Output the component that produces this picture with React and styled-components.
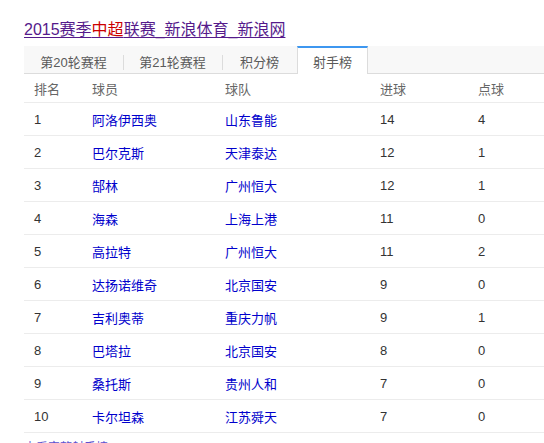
import React from "react";
import styled, { createGlobalStyle } from "styled-components";

const GlobalStyle = createGlobalStyle`
  html, body {
    margin: 0;
    padding: 0;
    background: #fff;
    overflow: hidden;
  }
  body {
    font-family: "Liberation Sans", "Noto Sans CJK SC", sans-serif;
    font-size: 13px;
    color: #333;
  }
`;

const tabs = [
  { label: "第20轮赛程", width: 99 },
  { label: "第21轮赛程", width: 99 },
  { label: "积分榜", width: 75 },
  { label: "射手榜", width: 71 },
];

const scorers = [
  { rank: 1, player: "阿洛伊西奥", team: "山东鲁能", goals: 14, penalties: 4 },
  { rank: 2, player: "巴尔克斯", team: "天津泰达", goals: 12, penalties: 1 },
  { rank: 3, player: "郜林", team: "广州恒大", goals: 12, penalties: 1 },
  { rank: 4, player: "海森", team: "上海上港", goals: 11, penalties: 0 },
  { rank: 5, player: "高拉特", team: "广州恒大", goals: 11, penalties: 2 },
  { rank: 6, player: "达扬诺维奇", team: "北京国安", goals: 9, penalties: 0 },
  { rank: 7, player: "吉利奥蒂", team: "重庆力帆", goals: 9, penalties: 1 },
  { rank: 8, player: "巴塔拉", team: "北京国安", goals: 8, penalties: 0 },
  { rank: 9, player: "桑托斯", team: "贵州人和", goals: 7, penalties: 0 },
  { rank: 10, player: "卡尔坦森", team: "江苏舜天", goals: 7, penalties: 0 },
];

export default function App() {
  const activeTab = 3;

  return (
    <Page>
      <GlobalStyle />
      <Title href="#">
        2015赛季<Hot>中超</Hot>联赛_新浪体育_新浪网
      </Title>
      <TabBar>
        {tabs.map((tab, index) => (
          <Tab key={tab.label} width={tab.width} isActive={index === activeTab}>
            {tab.label}
          </Tab>
        ))}
      </TabBar>
      <Table>
        <HeadRow>
          <Cell>排名</Cell>
          <Cell>球员</Cell>
          <Cell>球队</Cell>
          <Cell>进球</Cell>
          <Cell>点球</Cell>
        </HeadRow>
        {scorers.map((row) => (
          <Row key={row.rank}>
            <Cell>{row.rank}</Cell>
            <Cell>
              <CellLink href="#">{row.player}</CellLink>
            </Cell>
            <Cell>
              <CellLink href="#">{row.team}</CellLink>
            </Cell>
            <Cell>{row.goals}</Cell>
            <Cell>{row.penalties}</Cell>
          </Row>
        ))}
      </Table>
      <MoreLink href="#">查看完整射手榜</MoreLink>
    </Page>
  );
}

const Page = styled.div`
  padding: 19px 0 0 24px;
  height: 443px;
  box-sizing: border-box;
  overflow: hidden;
`;

const Title = styled.a`
  display: inline-block;
  font-size: 16px;
  line-height: 22px;
  color: #551a8b;
  text-decoration: underline;
  text-underline-offset: 2px;
  margin-bottom: 5px;
`;

const Hot = styled.span`
  color: #cc0000;
`;

const TabBar = styled.div`
  display: flex;
  height: 27px;
  background: #f8f8f8;
  border-bottom: 1px solid #dcdcdc;
`;

const Tab = styled.div`
  position: relative;
  display: flex;
  align-items: center;
  justify-content: center;
  flex: none;
  width: ${({ width }) => width}px;
  font-size: 13px;
  color: #5a5a5a;
  box-sizing: border-box;
  background: ${({ isActive }) => (isActive ? "#fff" : "transparent")};
  border-top: 2px solid ${({ isActive }) => (isActive ? "#3d97f0" : "transparent")};
  border-left: 1px solid ${({ isActive }) => (isActive ? "#dcdcdc" : "transparent")};
  border-right: 1px solid ${({ isActive }) => (isActive ? "#dcdcdc" : "transparent")};
  height: ${({ isActive }) => (isActive ? "28px" : "27px")};
  padding-top: ${({ isActive }) => (isActive ? "0" : "2px")};

  &:not(:first-child)::before {
    content: "";
    display: ${({ isActive }) => (isActive ? "none" : "block")};
    position: absolute;
    left: -1px;
    top: 7px;
    width: 1px;
    height: 15px;
    background: #dcdcdc;
  }
`;

const Table = styled.div`
  display: flex;
  flex-direction: column;
`;

const RowBase = styled.div`
  display: grid;
  grid-template-columns: 58px 133px 155px 98px 1fr;
  align-items: center;
  border-bottom: 1px solid #ececec;
  box-sizing: border-box;
`;

const HeadRow = styled(RowBase)`
  height: 29px;
  color: #666;
`;

const Row = styled(RowBase)`
  height: 33px;
  color: #333;
`;

const Cell = styled.div`
  padding-left: 10px;
  white-space: nowrap;
`;

const CellLink = styled.a`
  color: #0000cc;
  text-decoration: none;
`;

const MoreLink = styled.a`
  display: inline-block;
  margin-top: 5px;
  font-size: 12px;
  color: #5b4fcf;
  text-decoration: none;
`;
